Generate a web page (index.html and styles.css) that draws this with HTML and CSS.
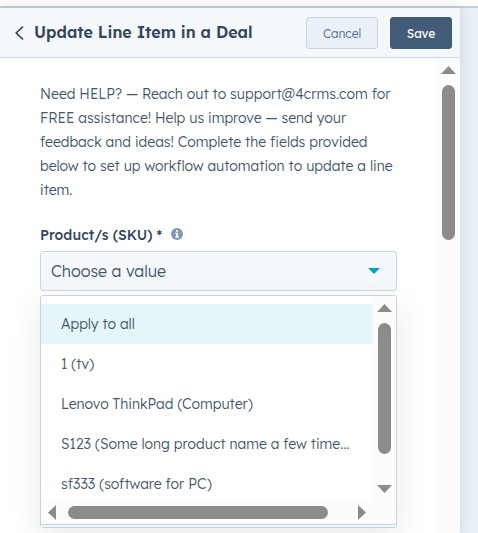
FILE: index.html
```html
<!DOCTYPE html>
<html lang="en">
<head>
   <meta charset="UTF-8">
   <meta name="viewport" content="width=device-width, initial-scale=1.0">
   <title>Update Line Item in a Deal</title>
   <link rel="stylesheet" href="styles.css">
</head>
<body>
   <div class="page">
      <div class="panel">
         <header class="panel-header">
            <svg class="back-icon" width="9" height="14" viewBox="0 0 9 14"><path d="M8 .6 1.2 7 8 13.4" fill="none" stroke="#33475b" stroke-width="1.6"/></svg>
            <h2>Update Line Item in a Deal</h2>
            <button type="button" class="btn btn-cancel">Cancel</button>
            <button type="button" class="btn btn-save">Save</button>
         </header>
         <div class="panel-body">
            <div class="content">
               <p class="help">
                  Need HELP? — Reach out to support@4crms.com for<br>
                  FREE assistance! Help us improve — send your<br>
                  feedback and ideas! Complete the fields provided<br>
                  below to set up workflow automation to update a line<br>
                  item.
               </p>
               <div class="label-row">
                  <label>Product/s (SKU) *</label>
                  <svg class="info-icon" width="12" height="12" viewBox="0 0 12 12"><circle cx="6" cy="6" r="6" fill="#7c98b6"/><path d="M5.1 2h1.9v1.7H5.1zM4.2 4.8H7v3.7h.9v1.2H4.2V8.5h.9V6h-.9z" fill="#fff"/></svg>
               </div>
               <div class="select">
                  <span>Choose a value</span>
                  <svg width="12" height="6" viewBox="0 0 12 6"><path d="M0 0h12L6 6z" fill="#00a4bd"/></svg>
               </div>
               <div class="menu">
                  <div class="menu-main">
                     <ul class="options">
                        <li class="active">Apply to all</li>
                        <li>1 (tv)</li>
                        <li>Lenovo ThinkPad (Computer)</li>
                        <li>S123 (Some long product name a few time...</li>
                        <li>sf333 (software for PC)</li>
                     </ul>
                     <div class="scroll-y">
                        <svg width="15" height="8" viewBox="0 0 15 8"><path d="M7.5 0 15 8H0z" fill="#8b8b8b"/></svg>
                        <div class="thumb"></div>
                        <svg class="down" width="15" height="8" viewBox="0 0 15 8"><path d="M0 0h15L7.5 8z" fill="#8b8b8b"/></svg>
                     </div>
                  </div>
                  <div class="scroll-x">
                     <svg width="8" height="15" viewBox="0 0 8 15"><path d="M8 0v15L0 7.5z" fill="#8b8b8b"/></svg>
                     <div class="thumb"></div>
                     <svg class="right" width="8" height="15" viewBox="0 0 8 15"><path d="M0 0v15l8-7.5z" fill="#8b8b8b"/></svg>
                  </div>
                  <div class="menu-footer"></div>
               </div>
            </div>
            <div class="scroll-page">
               <svg width="15" height="8" viewBox="0 0 15 8"><path d="M7.5 0 15 8H0z" fill="#8b8b8b"/></svg>
               <div class="thumb"></div>
            </div>
         </div>
      </div>
   </div>
</body>
</html>
```

FILE: styles.css
```css
* {
   box-sizing: border-box;
}
body {
   margin: 0;
   padding-top: 6px;
   height: 533px;
   overflow: hidden;
   font-family: 'Lexend Deca', 'Inter', sans-serif;
   font-weight: 300;
   color: #43566a;
   background: #fff;
}
svg {
   display: block;
   flex: none;
}
.page {
   height: 527px;
   border-top: 2px solid #c4d1e0;
   background: #eaf0f8;
}
.panel {
   width: 460px;
   height: 525px;
   background: #fff;
   box-shadow: 0 0 12px rgba(51, 71, 91, 0.18);
}
.panel-header {
   display: flex;
   align-items: center;
   height: 50px;
   padding: 0 8px 0 15px;
   background: #f5f8fb;
   border-bottom: 1px solid #cbd6e2;
}
.panel-header h2 {
   flex: 1;
   margin: -1px 0 0 10px;
   font-size: 16px;
   font-weight: 600;
   color: #33475b;
   white-space: nowrap;
}
.btn {
   height: 32px;
   padding: 1px 0 0;
   border: 1px solid #cbd6e2;
   border-radius: 3px;
   font-family: inherit;
   font-size: 12px;
   font-weight: 300;
   line-height: 29px;
}
.btn-cancel {
   width: 72px;
   margin-right: 12px;
   background: #eaf0f8;
   color: #506e91;
}
.btn-save {
   width: 62px;
   background: #425b76;
   border-color: #425b76;
   color: #fff;
   font-weight: 400;
}
.panel-body {
   display: flex;
   height: 475px;
}
.content {
   flex: 1;
   padding: 24px 40px 0;
}
.help {
   margin: 0;
   font-size: 14px;
   line-height: 24px;
   white-space: nowrap;
}
.label-row {
   display: flex;
   align-items: center;
   height: 24px;
   margin-top: 21px;
   font-size: 14px;
   font-weight: 500;
   color: #33475b;
}
.info-icon {
   margin: -3px 0 0 9px;
}
.select {
   display: flex;
   align-items: center;
   justify-content: space-between;
   width: 357px;
   height: 40px;
   margin-top: 4px;
   padding: 0 16px 0 10px;
   border: 1px solid #cbd6e2;
   border-radius: 3px;
   background: #f5f8fb;
   font-size: 16px;
}
.menu {
   width: 357px;
   height: 233px;
   margin-top: 4px;
   border: 1px solid #c4d2e3;
   border-radius: 3px;
   background: #fff;
   box-shadow: 0 10px 35px rgba(0, 0, 0, 0.09);
}
.menu-main {
   display: flex;
   height: 205px;
}
.options {
   width: 332px;
   margin: 0;
   padding: 8px 0 0;
   list-style: none;
   font-size: 14px;
   line-height: 40px;
   white-space: nowrap;
   overflow: hidden;
}
.options li {
   height: 40px;
   padding-left: 20px;
}
.options .active {
   background: #e5f5f8;
}
.scroll-y {
   display: flex;
   flex-direction: column;
   align-items: center;
   width: 23px;
   padding: 8px 0;
   background: #fcfcfc;
}
.thumb {
   flex: none;
   border-radius: 7px;
   background: #8b8b8b;
}
.scroll-y .thumb {
   width: 13px;
   height: 131px;
   margin-top: 11px;
}
.down {
   margin-top: auto;
}
.scroll-x {
   display: flex;
   align-items: center;
   height: 23px;
   padding: 0 30px 0 7px;
   background: #fcfcfc;
}
.scroll-x .thumb {
   width: 260px;
   height: 13px;
   margin-left: 12px;
}
.right {
   margin-left: auto;
}
.menu-footer {
   height: 3px;
   border-top: 1px solid #c4d2e3;
   background: #f5f8fb;
}
.scroll-page {
   display: flex;
   flex-direction: column;
   align-items: center;
   width: 23px;
   padding-top: 8px;
   background: #fcfcfc;
}
.scroll-page .thumb {
   width: 13px;
   height: 155px;
   margin-top: 11px;
}
```
